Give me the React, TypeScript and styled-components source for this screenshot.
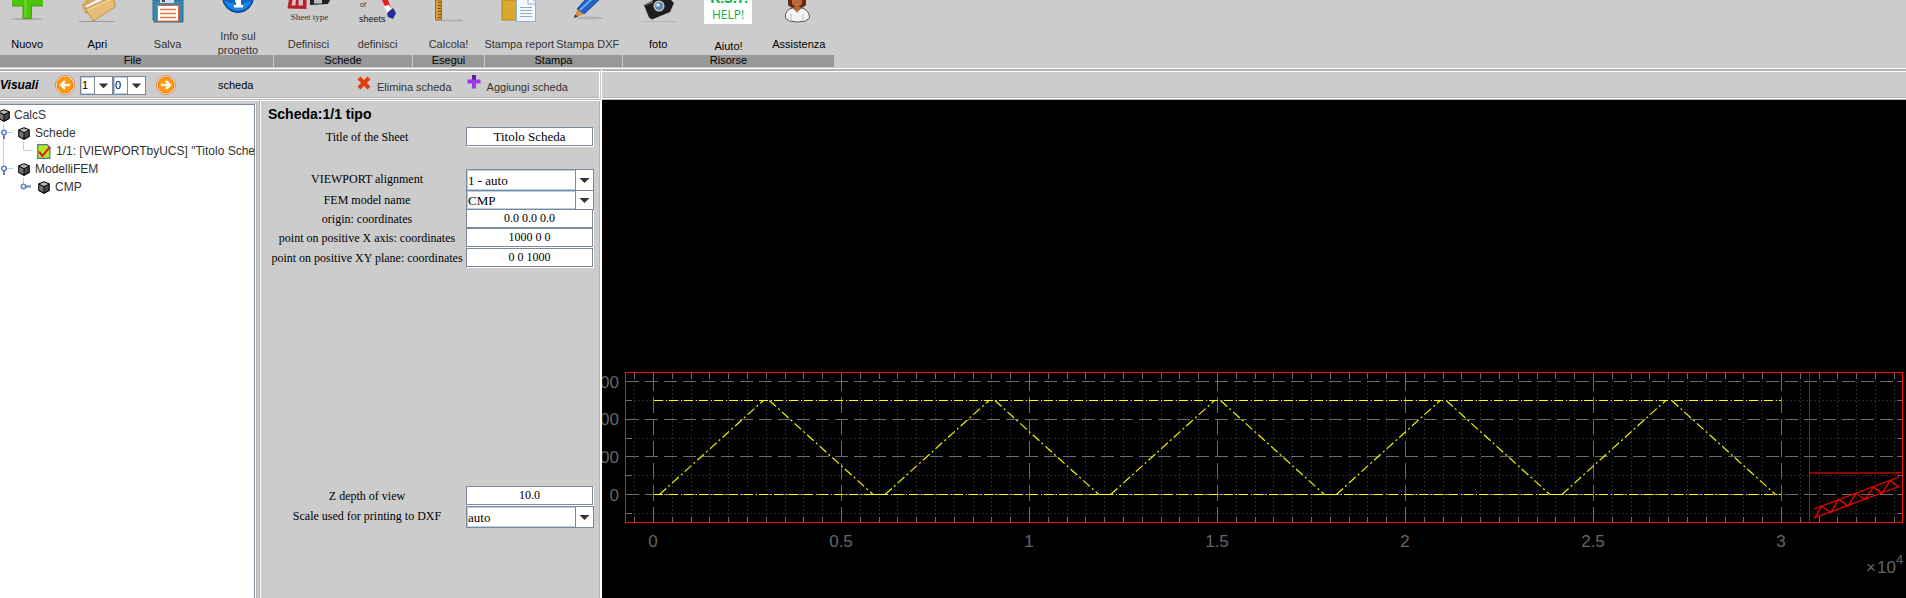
import React from "react";
import styled, { createGlobalStyle, css } from "styled-components";

const SANS = '"Liberation Sans", Arial, sans-serif';
const SERIF = '"Liberation Serif", "Times New Roman", serif';
const PANEL = "#cccccc";
const EDGE = "#b3b3b3";
const FIELD_EDGE = "#7a8a99";

const GlobalStyle = createGlobalStyle`
  *, *::before, *::after { box-sizing: border-box; }
  body { margin: 0; background: ${PANEL}; font-family: ${SANS}; font-size: 11px; color: #000; }
  button { font: inherit; }
`;

const Page = styled.div`
  display: flex;
  flex-direction: column;
  min-height: 100vh;
  overflow: hidden;
`;

/* ---------- ribbon ---------- */

const Ribbon = styled.nav`
  display: flex;
  height: 67px;
  margin-left: -8px;
  overflow: hidden;
`;

const Group = styled.section<{ $width: number }>`
  display: flex;
  flex-direction: column;
  flex: none;
  width: ${(p) => p.$width}px;
  border-right: 1px solid ${PANEL};
`;

const GroupButtons = styled.div`
  display: flex;
  height: 55px;
  overflow: hidden;
`;

const GroupTitle = styled.h2`
  margin: 0;
  height: 12px;
  background: #989898;
  font-size: 11px;
  font-weight: normal;
  line-height: 11px;
  text-align: center;
`;

const ToolButton = styled.button<{ $muted?: boolean; $gap?: number }>`
  display: flex;
  flex: 1;
  flex-direction: column;
  align-items: center;
  gap: ${(p) => p.$gap ?? 13}px;
  min-width: 0;
  height: 55px;
  padding: 0;
  border: 0;
  background: none;
  color: ${(p) => (p.$muted ? "#333" : "#000")};
  line-height: 14px;
  white-space: nowrap;
`;

const ToolIcon = styled.svg`
  flex: none;
  display: block;
  width: 60px;
  height: 24px;
`;

/* ---------- second bar ---------- */

const Bar = styled.div`
  display: flex;
  flex: none;
  height: 32px;
  margin-top: 1px;
  border-top: 1px solid #fff;
`;

const BarSection = styled.div<{ $grow?: boolean }>`
  display: flex;
  align-items: center;
  height: 31px;
  border-top: 2px solid ${EDGE};
  border-bottom: 1px solid ${EDGE};
  box-shadow: inset 0 1px 0 #fff, inset 0 -1px 0 #fff, inset 0 -2px 0 ${EDGE};
  ${(p) =>
    p.$grow
      ? css`
          flex: 1;
        `
      : css`
          flex: none;
          width: 602px;
          border-right: 3px double #fff;
        `}
`;

const BarTitle = styled.span`
  width: 55px;
  font-size: 12px;
  font-weight: bold;
  font-style: italic;
`;

const IconButton = styled.button`
  display: block;
  width: 20px;
  height: 20px;
  padding: 0;
  border: 0;
  background: none;
  svg { display: block; }
`;

const Pickers = styled.div`
  display: flex;
  margin: 0 10px 0 5px;
`;

const BarLabel = styled.span`
  width: 181px;
  padding-left: 42px;
`;

const Actions = styled.div`
  display: flex;
`;

const ActionButton = styled.button`
  display: flex;
  align-items: flex-start;
  gap: 6px;
  height: 20px;
  margin-right: 15px;
  padding: 0;
  border: 0;
  background: none;
  color: #333;
  svg { display: block; flex: none; }
  span { padding-top: 5px; line-height: 14px; }
`;

const Combo = styled.span<{ $height: number; $width: number }>`
  display: grid;
  grid-template-columns: 1fr 19px;
  width: ${(p) => p.$width}px;
  height: ${(p) => p.$height}px;
`;

const Select = styled.select<{ $plain?: boolean }>`
  grid-area: 1 / 1 / 2 / 3;
  appearance: none;
  min-width: 0;
  width: 100%;
  height: 100%;
  padding: 0 0 0 1px;
  border: 1px solid ${FIELD_EDGE};
  border-radius: 0;
  background: #fff;
  box-shadow: inset 0 0 0 1px #b8cfe5;
  color: #000;
  font-family: ${(p) => (p.$plain ? SANS : SERIF)};
  font-size: ${(p) => (p.$plain ? 11 : 13)}px;
`;

const ComboArrow = styled.svg`
  grid-area: 1 / 2 / 2 / 3;
  width: 19px;
  height: 100%;
  border: 1px solid ${FIELD_EDGE};
  background: #fff;
  pointer-events: none;
`;

/* ---------- main area ---------- */

const Main = styled.main`
  display: flex;
  flex: 1;
  min-height: 0;
`;

const TreePanel = styled.div`
  display: flex;
  flex: none;
  width: 260px;
  padding: 3px 4px 0 0;
  border-right: 1px solid ${EDGE};
  border-top: 1px solid #fff;
`;

const Tree = styled.ul`
  flex: 1;
  min-width: 0;
  margin: 0;
  padding: 1px 0 0;
  overflow: hidden;
  list-style: none;
  background: #fff;
  border-top: 1px solid ${FIELD_EDGE};
  border-right: 1px solid ${FIELD_EDGE};
  box-shadow: 1px 0 0 #fff, 2px 0 0 ${EDGE};
`;

const TreeRow = styled.li`
  display: flex;
  align-items: center;
  height: 18px;
  color: #333;
  font-size: 12px;
  line-height: 18px;
  white-space: nowrap;
  svg { display: block; flex: none; }
`;

const RootCube = styled.span`
  width: 11px;
  margin-left: -2px;
`;

const TreeText = styled.span`
  padding-left: 5px;
`;

const Form = styled.form`
  display: flex;
  flex: none;
  flex-direction: column;
  width: 342px;
  padding: 0 6px 69px 7px;
  border-top: 1px solid #fff;
  border-left: 1px solid #fff;
  border-right: 2px solid #fff;
  box-shadow: inset -1px 0 0 ${EDGE};
`;

const FormTitle = styled.h1`
  margin: 0;
  font-size: 14px;
  line-height: 26px;
`;

const FieldGroup = styled.div<{ $push?: boolean }>`
  display: flex;
  flex-direction: column;
  margin-top: ${(p) => (p.$push ? "auto" : "0")};
  margin-bottom: ${(p) => (p.$push ? "0" : "22px")};
`;

const Field = styled.div<{ $height?: number }>`
  display: grid;
  grid-template-columns: 1fr 128px;
  align-items: start;
  height: ${(p) => p.$height ?? 20}px;
`;

const FieldLabel = styled.label`
  font-family: ${SERIF};
  font-size: 12px;
  line-height: 20px;
  text-align: center;
  white-space: nowrap;
`;

const TextField = styled.input<{ $size?: number }>`
  width: 127px;
  height: 19px;
  padding: 0;
  border: 1px solid ${FIELD_EDGE};
  background: #fff;
  box-shadow: 1px 1px 0 #fff;
  font-family: ${SERIF};
  font-size: ${(p) => p.$size ?? 12}px;
  text-align: center;
`;

const Viewport = styled.div`
  flex: 1;
  min-width: 0;
  background: #000;
`;

const Plot = styled.svg`
  display: block;
  width: 100%;
  height: auto;
  font-family: ${SANS};
`;

/* ---------- small drawings ---------- */

const Down = () => (
  <ComboArrow viewBox="0 0 17 18" aria-hidden="true">
    <path d="M3.500 7h10l-5 5z" fill="#333" />
  </ComboArrow>
);

const RoundArrow = ({ left }: { left?: boolean }) => (
  <svg width="20" height="20" viewBox="0 0 20 20">
    <circle cx="10" cy="10" r="9.500" fill="#fff3dc" stroke="#dc8a4c" strokeWidth="1" />
    <circle cx="10" cy="10" r="7.800" fill="#ff9a08" stroke="#ee7404" strokeWidth="1" />
    <path
      d={left ? "M15 10H7M10 6l-4 4 4 4" : "M5 10h8M10 6l4 4-4 4"}
      fill="none"
      stroke="#fff"
      strokeWidth="2.400"
    />
  </svg>
);

const Cube = () => (
  <svg width="12" height="13" viewBox="0 0 12 13">
    <path d="M6 .8 11.200 3v6.400L6 12.300.8 9.400V3z" fill="#4a4a4a" stroke="#000" strokeWidth="1.200" />
    <path d="M6 1.200 10.800 3.200 6 5.600 1.200 3.200z" fill="#b4b4b4" />
    <path d="M1.400 3.900 5.700 6v5.600L1.400 9.100z" fill="#777" />
    <path d="M1 3.200 6 5.700l5-2.500M6 5.700V12" fill="none" stroke="#000" strokeWidth=".9" />
  </svg>
);

const SheetIcon = () => (
  <svg width="14" height="15" viewBox="0 0 14 15">
    <path d="M.7.7h9.600l2.600 2.600v11H.7z" fill="#b5e61d" stroke="#4a78a8" strokeWidth="1.200" />
    <path d="M2 7.600 5.400 12 13 2.800" fill="none" stroke="#e8141c" strokeWidth="2" />
  </svg>
);

const BranchGuide = ({ last }: { last?: boolean }) => (
  <svg width="18" height="18" viewBox="0 0 18 18">
    <path d={last ? "M3.500 0v9M4 8.500h9" : "M3.500 0v18M4 8.500h9"} stroke="#b8cfe5" />
    <path d="M4 9v6" stroke="#6382bf" strokeWidth="2" />
    <circle cx="4" cy="8.500" r="2.200" fill="#fff" stroke="#6382bf" strokeWidth="1.600" />
  </svg>
);

const LeafGuide = () => (
  <svg width="37" height="18" viewBox="0 0 37 18">
    <path d="M3.500 0v18M23.500 0v8.500H33" fill="none" stroke="#b8cfe5" />
  </svg>
);

const ClosedGuide = () => (
  <svg width="38" height="18" viewBox="0 0 38 18">
    <path d="M23.500 0v9" stroke="#b8cfe5" />
    <path d="M24 8.500h7" stroke="#6382bf" strokeWidth="2" />
    <circle cx="23.500" cy="8.500" r="2.200" fill="#fff" stroke="#6382bf" strokeWidth="1.600" />
  </svg>
);

const icons: Record<string, React.ReactNode> = {
  nuovo: (
    <>
      <ellipse cx="30" cy="19" rx="16" ry="1.200" fill="#aaa" />
      <path d="M26 0h9v0h11v6H35v13h-9V6H15V0z" fill="#4fc40c" />
      <path d="M15 6h11v12.500h8.500V6H46" fill="none" stroke="#3da506" />
      <path d="M27 0h3v17h-3z" fill="#62d321" />
    </>
  ),
  apri: (
    <>
      <path d="M12 21.500h36" stroke="#9b9b9b" />
      <path d="M14.500 5 19 0h20l2 2-22 12z" fill="#d6a75c" />
      <path d="m18 6 17-9 9 3-21 11z" fill="#f2f2f2" />
      <path d="M18 9 46 -4l2.500 10.500L26.500 21z" fill="#e6bd78" stroke="#c18f42" />
      <path d="m21 10 24-11" stroke="#f6dca6" />
    </>
  ),
  salva: (
    <>
      <path d="M15 0h30v22H17l-2-2z" fill="#3a86ab" stroke="#2b6f92" />
      <path d="M22 0h14v3H22z" fill="#d8dde0" />
      <path d="M24 0h3v2h-3z" fill="#3b4a52" />
      <path d="M19.500 5.500h21V21h-21z" fill="#fff" stroke="#e0683c" />
      <path d="M22 9.500h16M22 13.500h16M22 17.500h16" stroke="#e8764a" strokeWidth="1.400" />
      <path d="M15 22.500h30" stroke="#8d8d8d" />
    </>
  ),
  info: (
    <>
      <circle cx="30" cy="-3" r="15.500" fill="#0c63c4" stroke="#083c86" />
      <path d="M17 1a13.500 13.500 0 0 0 26 0q-13 6-26 0" fill="#1a86e8" />
      <path d="M27 0h6v5h2v2.500h-9V5h2V2h-1z" fill="#fff" />
    </>
  ),
  tipo: (
    <>
      <path d="M10 -1 8.500 8.500l19 .5V0z" fill="#b81e2c" />
      <path d="m13.500 0-1 5.500h4l.5-5.500zM19.500 0v5.500h4.500V0z" fill="#d9bcbc" />
      <path d="M31 0v5l18-1 2-4z" fill="#222" />
      <path d="M35 0v3.500h8V0z" fill="#bbb" />
      <text x="30.500" y="20" textAnchor="middle" fontSize="9" fontFamily={SERIF} fill="#333">
        Sheet type
      </text>
    </>
  ),
  fogli: (
    <>
      <text x="12" y="7" fontSize="7" fontFamily={SANS} fill="#333">of</text>
      <text x="11" y="22" fontSize="9" fontFamily={SANS} fill="#111">sheets</text>
      <path d="M34 0h6l3 8-4 3z" fill="#e21f26" />
      <path d="m36 6 5-1 4 7-5 2z" fill="#fff" />
      <path d="m40 12 5-4 3 5-3 6-5-2-1-3z" fill="#232d9c" />
    </>
  ),
  calcola: (
    <>
      <path d="M22 20.500h21" stroke="#aaa" strokeWidth="1.500" />
      <path d="M16.500 0h6v20h-6z" fill="#d99a3a" stroke="#a86a18" />
      <path d="M19 2.500h3M19 5.500h3M19 8.500h3M19 11.500h3M19 14.500h3M19 17.500h3" stroke="#7c4b0c" />
    </>
  ),
  report: (
    <>
      <path d="M13 0h26v20H13z" fill="#d9a92e" stroke="#b5861a" />
      <path d="M27.500 -2h15l4 4v19.500h-19z" fill="#f4f8fc" stroke="#8fb0cf" />
      <path d="M31 7.500h12M31 10.500h12M31 13.500h12M31 16.500h12" stroke="#8caccb" />
      <path d="M39 0v4h7" fill="none" stroke="#8fb0cf" />
    </>
  ),
  dxf: (
    <>
      <ellipse cx="32" cy="18" rx="13" ry="1.500" fill="#b0b0b0" />
      <path d="m19 9 11-12h14L26 14z" fill="#1d63c8" stroke="#0d3f92" />
      <path d="m22 10 14-13" stroke="#6fa8f2" strokeWidth="2" />
      <path d="m19 9 7 5-9 3.500z" fill="#d98b4a" />
      <path d="m17 14.500 3 2-4 1.500z" fill="#333" />
    </>
  ),
  foto: (
    <>
      <path d="M14 21.500h34" stroke="#b5b5b5" />
      <path d="M16 5 24 1l4-4h12l6 6-4 9-18 7.500-3-2z" fill="#1d1d1d" />
      <path d="m17 5 8-3" stroke="#888" />
      <circle cx="31" cy="6" r="5.500" fill="#c8c8c8" />
      <circle cx="31" cy="6" r="4" fill="#5a86b0" />
      <circle cx="30" cy="5" r="1.800" fill="#dcecf8" />
    </>
  ),
  aiuto: (
    <>
      <path d="M6 0h48v24H6z" fill="#fff" />
      <text x="31" y="3" textAnchor="middle" fontSize="16" fontFamily="Lato, sans-serif" fontWeight="bold" fill="#10b14c">
        R.S.T.
      </text>
      <text x="30" y="19" textAnchor="middle" fontSize="12" fontFamily="Open Sans, sans-serif" fill="#10b14c">
        HELP!
      </text>
    </>
  ),
  assistenza: (
    <>
      <path d="M19 0h18v5l-4 3h-10l-4-3z" fill="#6a2710" />
      <path d="M23 0h10v4l-5 4-5-4z" fill="#b8693c" />
      <path d="M16.500 18q-1-8 7-10l4.500 3 4.500-3q8 2 8 10l-4 3q-8 2-16 0z" fill="#f5f5f5" stroke="#555" />
      <path d="m24 7 4 6 4-6" fill="#b8693c" />
      <path d="M22 14v6M34 14v6" stroke="#bbb" />
    </>
  ),
};

type Tool = { icon: string; label: React.ReactNode; muted?: boolean; gap?: number };

const groups: { title: string; width: number; tools: Tool[] }[] = [
  {
    title: "File",
    width: 282,
    tools: [
      { icon: "nuovo", label: "Nuovo" },
      { icon: "apri", label: "Apri" },
      { icon: "salva", label: "Salva", muted: true },
      { icon: "info", label: <>Info sul<br />progetto</>, muted: true, gap: 5 },
    ],
  },
  {
    title: "Schede",
    width: 139,
    tools: [
      { icon: "tipo", label: "Definisci", muted: true },
      { icon: "fogli", label: "definisci", muted: true },
    ],
  },
  { title: "Esegui", width: 72, tools: [{ icon: "calcola", label: "Calcola!", muted: true }] },
  {
    title: "Stampa",
    width: 138,
    tools: [
      { icon: "report", label: "Stampa report", muted: true },
      { icon: "dxf", label: "Stampa DXF", muted: true },
    ],
  },
  {
    title: "Risorse",
    width: 212,
    tools: [
      { icon: "foto", label: "foto" },
      { icon: "aiuto", label: "Aiuto!", gap: 15 },
      { icon: "assistenza", label: "Assistenza" },
    ],
  },
];

/* ---------- truss plot ---------- */

const FRAME = { left: 23.5, right: 1300.5, top: 272.5, bottom: 422.5 };
const ORIGIN = { x: 51.5, y: 394.5 };
const MINOR = 18.8;
const TOP_CHORD = 300.5;
const BAY = 225.6;

const snap = (v: number) => Math.floor(v) + 0.5;
const steps = (from: number, to: number) => Array.from({ length: to - from + 1 }, (_, i) => from + i);
const columns = steps(-1, 66).map((i) => ({ x: snap(ORIGIN.x + i * MINOR), major: i % 10 === 0 }));
const rows = steps(-1, 6).map((i) => ({ y: snap(ORIGIN.y - i * MINOR), major: i % 2 === 0 }));
const xTicks = ["0", "0.5", "1", "1.5", "2", "2.5", "3"];
const yTicks = ["0", "1000", "2000", "3000"];

const TrussPlot = () => (
  <Plot viewBox="0 0 1304 498" preserveAspectRatio="xMinYMin meet" role="img" aria-label="Truss model">
    <g shapeRendering="crispEdges" fill="none">
      {columns.map(({ x, major }) => (
        <g key={x}>
          <path
            d={`M${x} ${FRAME.bottom}V${FRAME.top}`}
            stroke={major ? "#6c6c6c" : "#262626"}
            strokeDasharray={major ? "16 6" : "2 2"}
          />
          <path d={`M${x} ${FRAME.top}v6M${x} ${FRAME.bottom}v-6`} stroke="#6c6c6c" />
        </g>
      ))}
      {rows.map(({ y, major }) => (
        <g key={y}>
          <path
            d={`M${FRAME.left} ${y}H${FRAME.right}`}
            stroke={major ? "#6c6c6c" : "#262626"}
            strokeDasharray={major ? "13 6" : "2 2"}
          />
          <path d={`M${FRAME.left} ${y}h6M${FRAME.right} ${y}h-6`} stroke="#6c6c6c" />
        </g>
      ))}
      <g stroke="#ffff00" strokeDasharray="9 3 1 2">
        <path d={`M${ORIGIN.x} ${TOP_CHORD}H1179`} />
        <path d={`M${ORIGIN.x} ${ORIGIN.y}H1179`} />
        {steps(1, 4).map((i) => (
          <path key={i} strokeDasharray="none" d={`M${ORIGIN.x + i * BAY - 6} ${ORIGIN.y}h12`} />
        ))}
      </g>
      <path d="M1207.500 272.500v150" stroke="#e00000" />
      <path d="M1207.500 373H1300.500" stroke="#8c0000" strokeWidth="2" />
      <rect x={FRAME.left} y={FRAME.top} width={FRAME.right - FRAME.left} height={150} stroke="#ff0a0a" />
    </g>
    <g fill="none" stroke="#f4f400" strokeWidth="1.200" strokeDasharray="9 3 2 3">
      {steps(0, 4).map((i) => {
        const x = ORIGIN.x + i * BAY;
        const peak = x + BAY / 2;
        return (
          <path
            key={i}
            d={`M${x + 6} ${ORIGIN.y}L${peak - 3} ${TOP_CHORD}M${peak + 3} ${TOP_CHORD}L${x + BAY - 6} ${ORIGIN.y}`}
          />
        );
      })}
    </g>
    <path
      d="M1212 409l85-32M1212 418l85-31.500M1213 418l6.500-12 9.200 6.500 8-13 9.300 6.500 8-12.700 9 6.300 8.300-12.600 8.700 6.300 8-12.600 8.600 6"
      fill="none"
      stroke="#f80000"
      strokeWidth="1.300"
    />
    <g fill="#666" fontSize="17">
      {xTicks.map((t, i) => (
        <text key={t} x={51 + i * 188} y="447" textAnchor="middle">{t}</text>
      ))}
      {yTicks.map((t, i) => (
        <text key={t} x="17" y={snap(400 - i * MINOR * 2)} textAnchor="end">{t}</text>
      ))}
      <text x="1264" y="473">×</text>
      <text x="1275" y="473">10</text>
      <text x="1294" y="464" fontSize="13">4</text>
    </g>
  </Plot>
);

const ComboBox = ({ id, value, height }: { id: string; value: string; height: number }) => (
  <Combo $width={128} $height={height}>
    <Select id={id} defaultValue={value}>
      <option>{value}</option>
    </Select>
    <Down />
  </Combo>
);

export default function App() {
  return (
    <Page>
      <GlobalStyle />
      <Ribbon>
        {groups.map((g) => (
          <Group key={g.title} $width={g.width}>
            <GroupButtons>
              {g.tools.map((t) => (
                <ToolButton key={t.icon} type="button" $muted={t.muted} $gap={t.gap}>
                  <ToolIcon viewBox="0 0 60 24" aria-hidden="true">{icons[t.icon]}</ToolIcon>
                  <span>{t.label}</span>
                </ToolButton>
              ))}
            </GroupButtons>
            <GroupTitle>{g.title}</GroupTitle>
          </Group>
        ))}
      </Ribbon>

      <Bar>
        <BarSection>
          <BarTitle>Visuali</BarTitle>
          <IconButton type="button" aria-label="Indietro"><RoundArrow left /></IconButton>
          <Pickers>
            <Combo $width={33} $height={19}>
              <Select $plain aria-label="Scheda" defaultValue="1"><option>1</option></Select>
              <Down />
            </Combo>
            <Combo $width={33} $height={19}>
              <Select $plain aria-label="Vista" defaultValue="0"><option>0</option></Select>
              <Down />
            </Combo>
          </Pickers>
          <IconButton type="button" aria-label="Avanti"><RoundArrow /></IconButton>
          <BarLabel>scheda</BarLabel>
          <Actions>
            <ActionButton type="button">
              <svg width="14" height="16" viewBox="0 0 14 16">
                <path d="m2 3 10 10M12 3 2 13" stroke="#e03c0c" strokeWidth="4" />
              </svg>
              <span>Elimina scheda</span>
            </ActionButton>
            <ActionButton type="button">
              <svg width="14" height="16" viewBox="0 0 14 16">
                <path d="M7 0v6" stroke="#5a2090" strokeWidth="4" />
                <path d="M0.500 6.500h13M7 6v7.500" stroke="#9a3ae8" strokeWidth="4" />
              </svg>
              <span>Aggiungi scheda</span>
            </ActionButton>
          </Actions>
        </BarSection>
        <BarSection $grow />
      </Bar>

      <Main>
        <TreePanel>
          <Tree>
            <TreeRow><RootCube><Cube /></RootCube><TreeText>CalcS</TreeText></TreeRow>
            <TreeRow><BranchGuide /><Cube /><TreeText>Schede</TreeText></TreeRow>
            <TreeRow><LeafGuide /><SheetIcon /><TreeText>1/1: [VIEWPORTbyUCS] "Titolo Sche</TreeText></TreeRow>
            <TreeRow><BranchGuide last /><Cube /><TreeText>ModelliFEM</TreeText></TreeRow>
            <TreeRow><ClosedGuide /><Cube /><TreeText>CMP</TreeText></TreeRow>
          </Tree>
        </TreePanel>

        <Form>
          <FormTitle>Scheda:1/1 tipo</FormTitle>
          <FieldGroup>
            <Field>
              <FieldLabel htmlFor="title">Title of the Sheet</FieldLabel>
              <TextField id="title" $size={13} defaultValue="Titolo Scheda" />
            </Field>
          </FieldGroup>
          <FieldGroup>
            <Field $height={21}>
              <FieldLabel htmlFor="align">VIEWPORT alignment</FieldLabel>
              <ComboBox id="align" value="1 - auto" height={22} />
            </Field>
            <Field $height={19}>
              <FieldLabel htmlFor="fem">FEM model name</FieldLabel>
              <ComboBox id="fem" value="CMP" height={20} />
            </Field>
            <Field $height={19}>
              <FieldLabel htmlFor="origin">origin: coordinates</FieldLabel>
              <TextField id="origin" defaultValue="0.0 0.0 0.0" />
            </Field>
            <Field>
              <FieldLabel htmlFor="xaxis">point on positive X axis: coordinates</FieldLabel>
              <TextField id="xaxis" defaultValue="1000 0 0" />
            </Field>
            <Field>
              <FieldLabel htmlFor="plane">point on positive XY plane: coordinates</FieldLabel>
              <TextField id="plane" defaultValue="0 0 1000" />
            </Field>
          </FieldGroup>
          <FieldGroup $push>
            <Field>
              <FieldLabel htmlFor="depth">Z depth of view</FieldLabel>
              <TextField id="depth" defaultValue="10.0" />
            </Field>
            <Field $height={23}>
              <FieldLabel htmlFor="scale">Scale used for printing to DXF</FieldLabel>
              <ComboBox id="scale" value="auto" height={22} />
            </Field>
          </FieldGroup>
        </Form>

        <Viewport><TrussPlot /></Viewport>
      </Main>
    </Page>
  );
}
